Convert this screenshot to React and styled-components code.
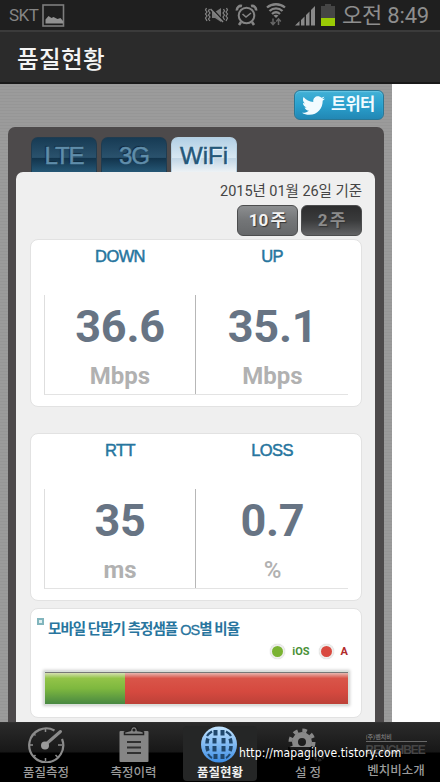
import React, { useState } from "react";
import { FaTwitter } from "react-icons/fa";
import styled, { createGlobalStyle } from "styled-components";

const GlobalStyle = createGlobalStyle`
  * {
    box-sizing: border-box;
  }
  body {
    margin: 0;
    background: #fff;
    font-family: Roboto, "Noto Sans CJK KR", sans-serif;
  }
  button {
    font-family: inherit;
    padding: 0;
    cursor: pointer;
  }
`;
const Screen = styled.div`
  position: relative;
  height: 782px;
  width: 440px;
  display: flex;
  flex-direction: column;
  overflow: hidden;
`;
const StatusBar = styled.div`
  height: 30px;
  flex: none;
  display: flex;
  align-items: center;
  padding: 0 11px 0 9px;
  background: #1f1f1f;
  color: #8e8e8e;
`;
const Carrier = styled.span`
  width: 33px;
  font-size: 17px;
  line-height: 30px;
  letter-spacing: -0.5px;
  color: #858585;
`;
const StatusIcons = styled.div`
  display: flex;
  margin-left: auto;
`;
const Clock = styled.span`
  margin-left: 2px;
  padding-top: 2px;
  width: 87px;
  font-size: 22px;
  line-height: 28px;
  letter-spacing: -0.2px;
  white-space: nowrap;
`;
const Header = styled.h1`
  height: 54px;
  flex: none;
  margin: 0;
  padding: 3px 17px 0;
  border-top: 2px solid #3b3b3b;
  border-bottom: 2px solid #191919;
  background: #2b2b2b;
  color: #f4f4f4;
  font-size: 23.5px;
  font-weight: 500;
  line-height: 50px;
  letter-spacing: 0.4px;
`;
const Page = styled.main`
  width: 392px;
  height: 638px;
  flex: none;
  padding: 6px 8px 0;
  background: repeating-linear-gradient(#9b9b9b 0 2px, #969696 2px 3px);
`;
const TwitterButton = styled.button`
  width: 90px;
  height: 30px;
  margin-left: auto;
  display: flex;
  align-items: center;
  gap: 6px;
  padding-left: 7px;
  border: 1px solid #2a7795;
  border-radius: 6px;
  background: linear-gradient(#43b1d6, #2aa0cd 50%, #2287b4);
  box-shadow: inset 0 1px 1px #65c5e4;
  color: #f2fbff;
  font-size: 16.5px;
  font-weight: 700;
  line-height: 28px;
  letter-spacing: -0.7px;
  white-space: nowrap;
`;
const Panel = styled.section`
  height: 595px;
  margin-top: 7px;
  padding: 10px 9px 0 8px;
  border-radius: 7px 7px 0 0;
  background: #4d4a4b;
`;
const Tabs = styled.div`
  height: 35px;
  display: flex;
  gap: 4px;
  padding-left: 15px;
`;
const Tab = styled.button`
  width: 66px;
  height: 35px;
  border: 1px solid ${(props) => (props.$active ? "#b5cfe0" : "#203c50")};
  border-bottom: 0;
  border-radius: 7px 7px 0 0;
  background: ${(props) =>
    props.$active
      ? "linear-gradient(#b3d0e5, #d7e7f2 58%, #c0d5e5 60%, #edf2f5)"
      : "linear-gradient(#173b54, #2a526d 57%, #12344c 60%, #265775)"};
  color: ${(props) => (props.$active ? "#24587a" : "#5f8daa")};
  text-shadow: ${(props) =>
    props.$active ? "1px 1px 1px #f6fbff" : "-1px -1px 1px #10273a"};
  font-family: "Liberation Sans", sans-serif;
  font-size: 24px;
  line-height: 35px;
  letter-spacing: ${(props) => (props.$active ? "0" : "-1.1px")};
  -webkit-text-stroke: 0.5px currentColor;
`;
const Content = styled.div`
  height: 550px;
  padding: 10px 14px 0;
  border-radius: 7px 7px 0 0;
  background: #efefef;
`;
const Period = styled.div`
  height: 19px;
  margin-right: -1px;
  font-size: 14.5px;
  line-height: 20px;
  text-align: right;
  letter-spacing: -0.05px;
  white-space: nowrap;
  color: #454545;
`;
const Weeks = styled.div`
  display: flex;
  justify-content: flex-end;
  gap: 3px;
  margin: 4px -1px 3px 0;
`;
const WeekButton = styled.button`
  width: 61px;
  height: 31px;
  border: 1px solid #4c4d4e;
  border-radius: 6px;
  background: ${(props) =>
    props.$active
      ? "linear-gradient(#8c8e90, #737577 50%, #66686a)"
      : "linear-gradient(#2d2d2e, #3a3b3c 50%, #626365)"};
  color: ${(props) => (props.$active ? "#f2f2f2" : "#8b8b8b")};
  text-shadow: 1px 1px 1px #333;
  font-size: 17px;
  font-weight: 700;
  line-height: 29px;
  word-spacing: -2px;
`;
const Card = styled.div`
  width: 332px;
  height: ${(props) => props.$height}px;
  margin-bottom: ${(props) => props.$gap || 0}px;
  border: 1px solid #e2e2e2;
  border-radius: 8px;
  background: #fff;
`;
const Titles = styled.div`
  display: grid;
  grid-template-columns: 152px 152px;
  padding: 6px 0 0 13px;
  height: 55px;
`;
const Title = styled.div`
  text-align: center;
  color: #26759e;
  font-family: "Liberation Sans", sans-serif;
  font-size: 16.5px;
  line-height: 20px;
  letter-spacing: -0.6px;
  -webkit-text-stroke: 0.5px currentColor;
`;
const Values = styled.div`
  display: grid;
  grid-template-columns: 151px 153px;
  width: 304px;
  height: 100px;
  margin-left: 13px;
  border-left: 1px solid #dedede;
  border-bottom: 1px solid #e3e3e3;
`;
const Measure = styled.div`
  text-align: center;
  &:first-child {
    border-right: 1px solid #b7b7b7;
  }
`;
const Value = styled.div`
  margin-top: 4px;
  height: 54px;
  color: #677484;
  font-size: 45px;
  font-weight: 700;
  line-height: 56px;
  letter-spacing: -0.3px;
`;
const Unit = styled.div`
  height: 30px;
  margin-top: 8px;
  color: #b1b1b1;
  font-size: 24px;
  font-weight: ${(props) => (props.$light ? 500 : 700)};
  line-height: 30px;
`;
const RatioTitle = styled.h2`
  display: flex;
  margin: 0;
  padding: 11px 0 0 6px;
  height: 32px;
  color: #28759e;
  font-size: 14.5px;
  font-weight: 700;
  line-height: 20px;
  letter-spacing: -0.95px;
  white-space: nowrap;
`;
const Latin = styled.span`
  margin-left: 3px;
  font-family: "Liberation Sans", sans-serif;
  font-size: 14.5px;
  font-weight: 400;
  -webkit-text-stroke: 0.3px currentColor;
`;
const Bullet = styled.span`
  width: 7px;
  height: 7px;
  margin: -2px 4px 0 0;
  border: 2px solid #82b5bd;
  background: #e0eff0;
`;
const Legend = styled.div`
  display: flex;
  align-items: center;
  justify-content: flex-end;
  height: 20px;
  padding-right: 13px;
  font-size: 11px;
  font-weight: 700;
`;
const Dot = styled.span`
  width: 15px;
  height: 15px;
  margin: 0 7px 0 ${(props) => props.$left || 0}px;
  border: 2px solid #eeeeec;
  border-radius: 50%;
  background: ${(props) => props.$color};
  box-shadow: 0 0 1px #bbb;
`;
const LegendText = styled.span`
  color: ${(props) => props.$color};
`;
const RatioBar = styled.div`
  display: flex;
  width: 303px;
  height: 32px;
  margin: 11px 0 0 14px;
  border-top: 1px solid #777;
  box-shadow: 0 0 0 1px #d8dfd9, 0 0 3px 2px #ccc;
`;
const Segment = styled.div`
  background: ${(props) =>
    props.$green
      ? "linear-gradient(#d5dfb1, #93c448 17%, #7eb83f 50%, #488842)"
      : "linear-gradient(#e7b7b0, #d95549 17%, #d5493f 60%, #bd4138)"};
`;
const NavBar = styled.nav`
  height: 60px;
  flex: none;
  display: grid;
  grid-template-columns: 92px 83px 89px 88px 88px;
  border-top: 1px solid #303030;
  background: linear-gradient(#2b2b2b, #171717 29px, #000 30px);
`;
const NavItem = styled.button`
  height: 55px;
  margin: 3px 0 0 ${(props) => (props.$active ? 8 : 0)}px;
  width: ${(props) => (props.$active ? "74px" : "auto")};
  display: flex;
  flex-direction: column;
  align-items: center;
  border: 0;
  border-radius: 4px;
  background: ${(props) => (props.$active ? "#252626" : "transparent")};
  color: ${(props) => (props.$active ? "#f0f0f0" : "#9a9a9a")};
  font-size: 12.5px;
  font-weight: ${(props) => (props.$active ? 700 : 500)};
  line-height: 20px;
  white-space: nowrap;
  svg {
    flex: none;
    margin-top: -1px;
  }
`;
const Brand = styled.div`
  width: 61px;
  height: 37px;
  padding-top: 7px;
  overflow: hidden;
  color: #707070;
  text-align: left;
  font-size: 6px;
  font-weight: 700;
  line-height: 7px;
`;
const BrandName = styled.div`
  height: 16px;
  margin-top: 1px;
  padding-top: 2px;
  border-top: 1px solid #686868;
  color: #454545;
  font-family: "Liberation Sans", sans-serif;
  font-size: 12px;
  line-height: 13px;
  letter-spacing: -1px;
`;
const Watermark = styled.span`
  position: absolute;
  left: 239px;
  top: 746px;
  color: #fff;
  font-family: "DejaVu Sans Condensed", "DejaVu Sans", sans-serif;
  font-stretch: condensed;
  font-size: 12px;
  line-height: 15px;
  letter-spacing: 0.12px;
  white-space: nowrap;
`;

const PictureIcon = () => (
  <svg width="24" height="24" viewBox="0 0 24 24">
    <rect x="1" y="2" width="20.5" height="21" fill="none" stroke="#7d7d7d" strokeWidth="1.6" />
    <path d="M3.500 20.500v-4l3-3.500 3 2 2-1 4 2 3-1 2.500 3v2.500z" fill="#929292" />
  </svg>
);

const SystemIcons = () => (
  <svg width="136" height="30" viewBox="204 0 136 30" fill="none" stroke="#858585">
    <g strokeWidth="1.2">
      <path d="M206.500 8l-1 2 1.500 2-1.500 2 1.500 2-1.500 2 1.500 3M209.500 9l-1 2 1.500 2-1.500 2 1.500 2-1.500 2 1.500 2M223.500 9l1 2-1.500 2 1.500 2-1.500 2 1.500 3M226.500 8l1 2-1.500 2 1.500 2-1.500 2 1.500 2-1.500 3" />
      <path d="M212 12h3l6-4v14l-6-4h-3z" fill="#777" stroke="none" />
      <path d="M211 7.500l12 13" stroke="#1f1f1f" strokeWidth="1.800" />
      <path d="M210.500 9l12.500 13" strokeWidth="1.500" />
    </g>
    <circle cx="246.500" cy="15.500" r="7.800" strokeWidth="2" />
    <path d="M237 10.500a4 4 0 0 1 5-4.500M251 6a4 4 0 0 1 5 4.500M241 22l-2 3M252 22l2 3" strokeWidth="2.600" />
    <path d="M242.500 14l3.500 3 5-4" strokeWidth="1.600" />
    <g strokeWidth="2.300">
      <path d="M267 7.500c5-4.300 13-4.300 18 0M269.500 11c3.800-3.500 9.200-3.500 13 0M272 14c2.500-2.200 5.500-2.200 8 0" />
    </g>
    <path d="M273.500 15.500q2.500-1.500 5 0l-2.500 2.500z" fill="#888" stroke="none" />
    <path d="M273 18.500v6m-2.300-2.400l2.300 2.600 2.300-2.600M278.500 25v-6m-2.300 2.400l2.300-2.600 2.300 2.600" stroke="#666" strokeWidth="1.500" />
    <path d="M295 25.500l4.500-4.500v4.500zM301 20l3.500-3.500v9h-3.500zM306 15l3.500-3.500v14h-3.500zM311 10l4-4v19.500h-4z" fill="#898989" stroke="none" />
    <path d="M321 6h4V4h6v2h4v20h-14z" fill="#454545" stroke="none" />
    <path d="M321 18h14v8h-14z" fill="#9acb05" stroke="none" />
  </svg>
);

const GaugeIcon = () => (
  <svg width="38" height="38" viewBox="0 0 38 38" fill="none" stroke="#8b8b8b">
    <path d="M27.500 5.500A17 17 0 1 0 35 14" strokeWidth="2.200" />
    <path d="M18.500 3v4M2 20h4M31 20h4M6.500 8.500l2 2M18.500 33v3M6.500 32l2-2M28.500 30l2 2" strokeWidth="1.500" />
    <path d="M18 20L33.500 6.500" strokeWidth="3" strokeLinecap="round" />
    <circle cx="18" cy="20.500" r="4" fill="#999" stroke="none" />
  </svg>
);

const ClipboardIcon = () => (
  <svg width="38" height="38" viewBox="0 0 38 38">
    <path d="M5.500 6h27q1 0 1 1v29q0 1-1 1h-27q-1 0-1-1V7q0-1 1-1z" fill="#858585" />
    <path d="M9.500 9.500V7q4-1 6-1.500.5-4 3.500-4t3.500 4q4 .5 6 1.500v2.500z" fill="#858585" stroke="#202020" strokeWidth="1.500" />
    <circle cx="19" cy="5" r="1.600" fill="#202020" />
    <path d="M12 17h14M12 22.500h14M12 28h14" stroke="#303030" strokeWidth="1.800" />
  </svg>
);

const GlobeIcon = () => (
  <svg width="38" height="38" viewBox="0 0 38 38">
    <defs>
      <linearGradient id="globe" x1="0" y1="0" x2="0" y2="1">
        <stop offset="0" stopColor="#c4e5ff" />
        <stop offset="1" stopColor="#3c8de5" />
      </linearGradient>
    </defs>
    <circle cx="18" cy="19.500" r="18" fill="url(#globe)" />
    <g fill="none" stroke="#20486e" strokeWidth="4">
      <path d="M11 6.500q-3.500 2-5 4.500M25 6.500q3.500 2 5 4.500" strokeWidth="2.200" />
      <path d="M14.500 5v5.500M21.500 5v5.500M13.500 13v5.500M22.500 13v5.500M13.500 21v5.500M22.500 21v5.500M14.500 29v5M21.500 29v5" />
      <path d="M7 13.500q-1 2-1 5M29 13.500q1 2 1 5M6 21q0 3 1 5M30 21q0 3-1 5" strokeWidth="3.600" />
      <path d="M7 29q2 3 4 4M29 29q-2 3-4 4" strokeWidth="2.200" />
    </g>
  </svg>
);

const GearIcon = () => (
  <svg width="40" height="38" viewBox="0 0 40 38">
    <g fill="none" stroke="#888">
      <circle cx="14" cy="17" r="7" strokeWidth="6" />
      <circle cx="14" cy="17" r="11.500" strokeWidth="4" strokeDasharray="4.500 4.532" />
    </g>
    <path d="M0 22h29v15H0z" fill="#000" opacity=".8" />
    <circle cx="31" cy="31" r="4" fill="none" stroke="#252525" strokeWidth="3" strokeDasharray="3 1" />
  </svg>
);

const navItems = [
  { label: "품질측정", icon: <GaugeIcon /> },
  { label: "측정이력", icon: <ClipboardIcon /> },
  { label: "품질현황", icon: <GlobeIcon /> },
  { label: "설 정", icon: <GearIcon /> },
  {
    label: "벤치비소개",
    icon: (
      <Brand>
        (주)벤치비
        <BrandName>BENCHBEE</BrandName>
      </Brand>
    ),
  },
];

const ResultCard = ({ items, gap }) => (
  <Card $height={168} $gap={gap}>
    <Titles>
      {items.map((item) => (
        <Title key={item.title}>{item.title}</Title>
      ))}
    </Titles>
    <Values>
      {items.map((item) => (
        <Measure key={item.title}>
          <Value>{item.value}</Value>
          <Unit $light={item.unit === "%"}>{item.unit}</Unit>
        </Measure>
      ))}
    </Values>
  </Card>
);

const App = () => {
  const [tab, setTab] = useState("WiFi");
  const [weeks, setWeeks] = useState("10 주");
  const [page, setPage] = useState("품질현황");
  return (
    <Screen>
      <GlobalStyle />
      <StatusBar>
        <Carrier>SKT</Carrier>
        <PictureIcon />
        <StatusIcons>
          <SystemIcons />
        </StatusIcons>
        <Clock>오전 8:49</Clock>
      </StatusBar>
      <Header>품질현황</Header>
      <Page>
        <TwitterButton>
          <FaTwitter size={23} />
          트위터
        </TwitterButton>
        <Panel>
          <Tabs>
            {["LTE", "3G", "WiFi"].map((name) => (
              <Tab key={name} $active={tab === name} onClick={() => setTab(name)}>
                {name}
              </Tab>
            ))}
          </Tabs>
          <Content>
            <Period>2015년 01월 26일 기준</Period>
            <Weeks>
              {["10 주", "2 주"].map((name) => (
                <WeekButton
                  key={name}
                  $active={weeks === name}
                  onClick={() => setWeeks(name)}
                >
                  {name}
                </WeekButton>
              ))}
            </Weeks>
            <ResultCard
              gap={26}
              items={[
                { title: "DOWN", value: "36.6", unit: "Mbps" },
                { title: "UP", value: "35.1", unit: "Mbps" },
              ]}
            />
            <ResultCard
              gap={7}
              items={[
                { title: "RTT", value: "35", unit: "ms" },
                { title: "LOSS", value: "0.7", unit: "%" },
              ]}
            />
            <Card $height={110}>
              <RatioTitle>
                <Bullet />
                모바일 단말기 측정샘플 <Latin>OS</Latin>별 비율
              </RatioTitle>
              <Legend>
                <Dot $color="#7ab332" />
                <LegendText $color="#4b9138">iOS</LegendText>
                <Dot $color="#d9493f" $left={9} />
                <LegendText $color="#b22b2b">A</LegendText>
              </Legend>
              <RatioBar>
                <Segment $green style={{ width: "26.3%" }} />
                <Segment style={{ width: "73.7%" }} />
              </RatioBar>
            </Card>
          </Content>
        </Panel>
      </Page>
      <NavBar>
        {navItems.map((item) => (
          <NavItem
            key={item.label}
            $active={page === item.label}
            onClick={() => setPage(item.label)}
          >
            {item.icon}
            {item.label}
          </NavItem>
        ))}
      </NavBar>
      <Watermark>http://mapagilove.tistory.com</Watermark>
    </Screen>
  );
};

export default App;
